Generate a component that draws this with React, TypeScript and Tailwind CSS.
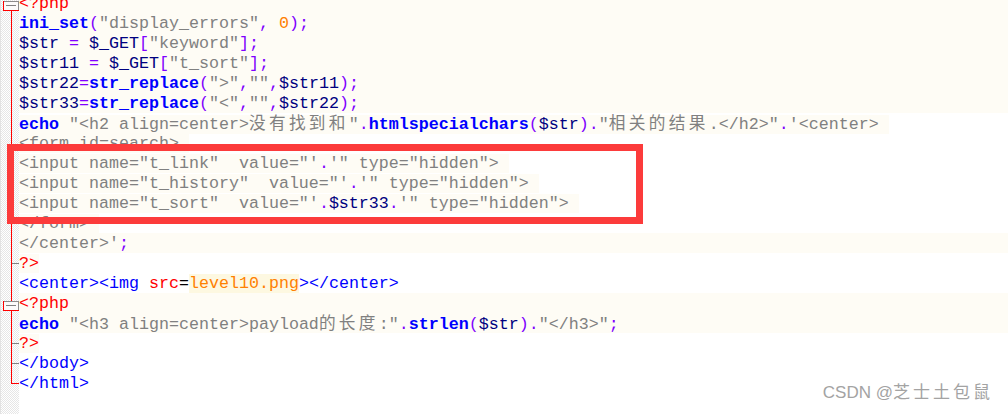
import React from 'react';

type Tok = [string, string];
type Line = { toks: Tok[]; fill: 'full' | 'text' | 'none' };

// Notepad++ style colours
const TAG = 'text-[#ff0000]';
const KW = 'text-[#0000ff] font-bold';
const VAR = 'text-[#000080]';
const STR = 'text-[#808080]';
const OP = 'text-[#8000ff]';
const NUM = 'text-[#ff8000]';
const HTML = 'text-[#0000ff]';
const ATTR = 'text-[#ff0000]';
const EQ = 'text-black';
const AVAL = 'text-[#ff8000] bg-[#fdf8e1]';

const lines: Line[] = [
  { fill: 'full', toks: [['<?php', TAG]] },
  {
    fill: 'full',
    toks: [['ini_set', KW], ['(', OP], ['"display_errors"', STR], [',', OP], [' ', ''], ['0', NUM], [')', OP], [';', OP]],
  },
  {
    fill: 'full',
    toks: [['$str', VAR], [' ', ''], ['=', OP], [' ', ''], ['$_GET', VAR], ['[', OP], ['"keyword"', STR], [']', OP], [';', OP]],
  },
  {
    fill: 'full',
    toks: [['$str11', VAR], [' ', ''], ['=', OP], [' ', ''], ['$_GET', VAR], ['[', OP], ['"t_sort"', STR], [']', OP], [';', OP]],
  },
  {
    fill: 'full',
    toks: [['$str22', VAR], ['=', OP], ['str_replace', KW], ['(', OP], ['">"', STR], [',', OP], ['""', STR], [',', OP], ['$str11', VAR], [')', OP], [';', OP]],
  },
  {
    fill: 'full',
    toks: [['$str33', VAR], ['=', OP], ['str_replace', KW], ['(', OP], ['"<"', STR], [',', OP], ['""', STR], [',', OP], ['$str22', VAR], [')', OP], [';', OP]],
  },
  {
    fill: 'text',
    toks: [
      ['echo', KW], [' ', ''], ['"<h2 align=center>没有找到和"', STR], ['.', OP], ['htmlspecialchars', KW], ['(', OP], ['$str', VAR], [')', OP],
      ['.', OP], ['"相关的结果.</h2>"', STR], ['.', OP], ["'<center> ", STR],
    ],
  },
  { fill: 'text', toks: [['<form id=search> ', STR]] },
  { fill: 'text', toks: [['<input name="t_link"  value="\'', STR], ['.', OP], ['\'" type="hidden"> ', STR]] },
  { fill: 'text', toks: [['<input name="t_history"  value="\'', STR], ['.', OP], ['\'" type="hidden"> ', STR]] },
  {
    fill: 'text',
    toks: [['<input name="t_sort"  value="\'', STR], ['.', OP], ['$str33', VAR], ['.', OP], ['\'" type="hidden"> ', STR]],
  },
  { fill: 'text', toks: [['</form> ', STR]] },
  { fill: 'full', toks: [["</center>'", STR], [';', OP]] },
  { fill: 'text', toks: [['?>', TAG]] },
  {
    fill: 'none',
    toks: [['<center><img', HTML], [' ', ''], ['src', ATTR], ['=', EQ], ['level10.png', AVAL], ['></center>', HTML]],
  },
  { fill: 'full', toks: [['<?php', TAG]] },
  {
    fill: 'full',
    toks: [
      ['echo', KW], [' ', ''], ['"<h3 align=center>payload的长度:"', STR], ['.', OP], ['strlen', KW], ['(', OP], ['$str', VAR], [')', OP],
      ['.', OP], ['"</h3>"', STR], [';', OP],
    ],
  },
  { fill: 'text', toks: [['?>', TAG]] },
  { fill: 'none', toks: [['</body>', HTML]] },
  { fill: 'none', toks: [['</html>', HTML]] },
];

// CJK glyphs take two monospace cells in the editor
const withCjk = (text: string) =>
  text.split(/([\u4e00-\u9fff]+)/).map((part, i) =>
    /[\u4e00-\u9fff]/.test(part) ? (
      <span key={i} className="font-['Noto_Sans_CJK_SC',sans-serif] tracking-[3.33px] leading-none">
        {part}
      </span>
    ) : (
      part
    )
  );

const FoldBox: React.FC<{ y: number }> = ({ y }) => (
  <g>
    <rect x={1} y={y} width={16} height={10} fill="#fbfbfb" />
    <rect x={1} y={y} width={16} height={1} fill="#8c8c8c" />
    <rect x={16} y={y} width={1} height={10} fill="#8c8c8c" />
    <rect x={1} y={y} width={1} height={10} fill="#ff0000" />
    <rect x={1} y={y + 9} width={16} height={1} fill="#ff0000" />
    <rect x={4} y={y + 4} width={10} height={1} fill="#808080" />
  </g>
);

const FoldMargin: React.FC = () => (
  <div className="w-[19px] h-full shrink-0 border-l border-[#e2e2e2] bg-[repeating-conic-gradient(#e6e6e6_0%_25%,#ffffff_0%_50%)] bg-[length:2px_2px]">
    <svg width="19" height="414" viewBox="-1 0 19 414" shapeRendering="crispEdges">
      <FoldBox y={1} />
      <rect x={9} y={11} width={1} height={290} fill="#ff0000" />
      <FoldBox y={301} />
      <rect x={9} y={311} width={1} height={73} fill="#ff0000" />
      <rect x={9} y={383} width={8} height={1} fill="#ff0000" />
      <rect x={10} y={263} width={7} height={1} fill="#808080" />
      <rect x={10} y={343} width={7} height={1} fill="#808080" />
      <rect x={10} y={363} width={7} height={1} fill="#808080" />
    </svg>
  </div>
);

const CodeLine: React.FC<{ line: Line }> = ({ line }) => {
  const body = line.toks.map(([text, cls], i) => (
    <span key={i} className={cls}>
      {withCjk(text)}
    </span>
  ));
  return (
    <div className={`h-[20px] pt-[1px] whitespace-pre ${line.fill === 'full' ? 'bg-[#fefcf5]' : ''}`}>
      {line.fill === 'text' ? <span className="bg-[#fefcf5]">{body}</span> : body}
    </div>
  );
};

export default function App() {
  return (
    <div className="relative w-[1008px] h-[414px] overflow-hidden bg-white flex">
      <FoldMargin />
      <div className="flex-1 -mt-[7px] font-['Liberation_Mono','Noto_Sans_CJK_SC',monospace] text-[16.67px] leading-[20px] text-black">
        {lines.map((line, i) => (
          <CodeLine key={i} line={line} />
        ))}
      </div>

      {/* annotation box */}
      <div className="absolute left-[7px] top-[144px] w-[636px] h-[80px] border-[7px] border-[#fc3b3b]" />

      {/* watermark */}
      <div className="absolute right-[15px] top-[382px] text-[17px] leading-[22px] text-[#a3a3a3] font-['Liberation_Sans','Noto_Sans_CJK_SC',sans-serif]">
        CSDN @<span className="tracking-[3px]">芝士土包鼠</span>
      </div>
    </div>
  );
}
